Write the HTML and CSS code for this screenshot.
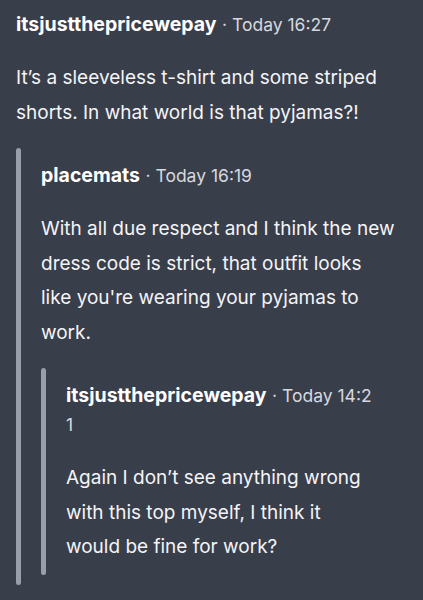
FILE: index.html
```html
<!DOCTYPE html>
<html lang="en">
<head>
    <meta charset="UTF-8">
    <meta name="viewport" content="width=device-width, initial-scale=1.0">
    <title>Comments</title>
    <link rel="stylesheet" href="styles.css">
</head>
<body>
    <div class="thread">
        <div class="comment">
            <div class="comment-head">
                <span class="author">itsjustthepricewepay</span>
                <span class="meta">· Today 16:27</span>
            </div>
            <p class="comment-body">It’s a sleeveless t-shirt and some striped shorts. In what world is that pyjamas?!</p>

            <div class="reply reply-1">
                <div class="reply-bar"></div>
                <div class="comment">
                    <div class="comment-head">
                        <span class="author">placemats</span>
                        <span class="meta">· Today 16:19</span>
                    </div>
                    <p class="comment-body">With all due respect and I think the new dress code is strict, that outfit looks like you're wearing your pyjamas to work.</p>

                    <div class="reply reply-2">
                        <div class="reply-bar"></div>
                        <div class="comment">
                            <div class="comment-head">
                                <span class="author">itsjustthepricewepay</span>
                                <span class="meta">· Today 14:21</span>
                            </div>
                            <p class="comment-body">Again I don’t see anything wrong with this top myself, I think it would be fine for work?</p>
                        </div>
                    </div>
                </div>
            </div>
        </div>
    </div>
</body>
</html>
```

FILE: styles.css
```css
/* Загальні стилі */
body {
    background-color: #393e4b;
    color: #f4f4f6;
    font-family: 'Inter', 'Noto Sans', sans-serif;
    margin: 0;
    overflow: hidden;
}

.thread {
    padding: 0 7px 0 16px;
}

.comment {
    padding-top: 13px;
    flex: 1;
    min-width: 0;
}

.thread > .comment {
    padding-top: 10px;
}

.comment-head {
    font-size: 19.5px;
    line-height: 29px;
    word-break: break-all;
}

.author {
    font-weight: 700;
    color: #ffffff;
}

.meta {
    font-size: 17.5px;
    color: #d6d8de;
}

.comment-body {
    margin: 22px 0 0;
    font-size: 19px;
    line-height: 34.5px;
}

/* Відповіді */
.reply {
    display: flex;
    gap: 20px;
    margin-top: 18px;
    padding-bottom: 10px;
}

.reply-bar {
    width: 5px;
    flex-shrink: 0;
    border-radius: 3px;
    background-color: #9a9eaa;
    margin-bottom: -10px;
}

.reply-1 {
    margin-right: 21px;
}

.reply-2 {
    margin-right: 18px;
}
```
